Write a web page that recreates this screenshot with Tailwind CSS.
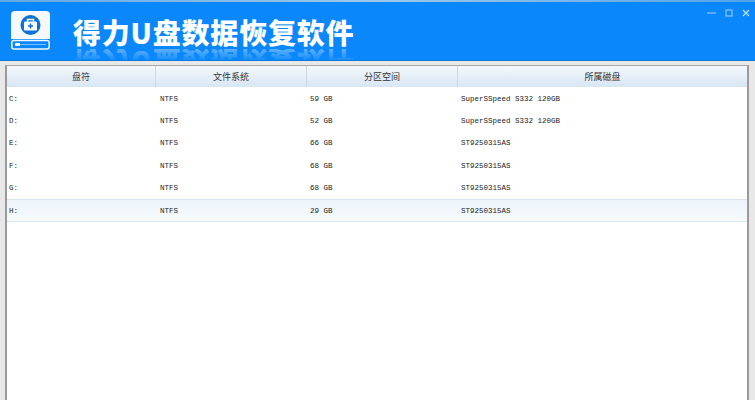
<!DOCTYPE html>
<html lang="zh">
<head>
<meta charset="utf-8">
<script src="https://cdn.jsdelivr.net/npm/@tailwindcss/browser@4"></script>
</head>
<body class="w-[755px] h-[400px] overflow-hidden bg-[#e8e8e8] font-['Liberation_Mono','Noto_Sans_CJK_SC',monospace]">
<div class="flex flex-col h-[400px]">
  <div class="h-[2px] bg-gradient-to-r from-[#5fa8e6] via-[#9cc8ec] to-[#4fa3ea] shrink-0"></div>
  <header class="relative h-[59px] shrink-0 bg-[#0a88fb] border-b border-b-[#0a78dc] flex items-start pl-[11px] pt-[9px] gap-[23px] overflow-hidden">
    <svg class="w-[39px] h-[39px] shrink-0" viewBox="0 0 39 39" aria-hidden="true">
      <path d="M4 0H35A4 4 0 0 1 39 4V28H0V4A4 4 0 0 1 4 0Z" fill="#f6f9fc"/>
      <circle cx="19.5" cy="14" r="10" fill="#0a72d6"/>
      <path d="M16.5 10.5V8.5H22.5V10.5" fill="none" stroke="#fff" stroke-width="1.4"/>
      <rect x="13" y="10.5" width="13" height="9" rx="1.2" fill="#fff"/>
      <path d="M19.5 12.5V17.5M17 15H22" stroke="#0a72d6" stroke-width="1.5"/>
      <rect x="0.8" y="29.5" width="37.4" height="8.5" rx="2.2" fill="#0a88fb" stroke="#f0f7fd" stroke-width="1.5"/>
      <rect x="4" y="32" width="5" height="3" fill="#f0f7fd"/>
      <rect x="9" y="33" width="26" height="1" fill="#7cc0f8"/>
    </svg>
    <div class="relative mt-[1px] h-[49px] w-[290px]">
      <h1 class="font-['Noto_Sans_CJK_SC',sans-serif] font-black text-[28px] leading-[40px] tracking-[0.8px] text-white whitespace-nowrap">得力U盘数据恢复软件</h1>
      <div aria-hidden="true" class="absolute left-0 top-[37px] h-[13px] w-[290px] overflow-hidden">
        <div class="-scale-y-100 font-['Noto_Sans_CJK_SC',sans-serif] font-black text-[28px] leading-[28px] tracking-[0.8px] text-white/35 whitespace-nowrap">得力U盘数据恢复软件</div>
        <div class="absolute inset-0 bg-gradient-to-b from-[#0a88fb]/0 to-[#0a88fb]"></div>
      </div>
    </div>
    <div class="absolute right-[5px] top-[7px] flex items-center gap-[9px]">
      <svg class="w-[9px] h-[8px]" viewBox="0 0 9 8" aria-hidden="true"><path d="M0 4H9" stroke="#8cc6fa" stroke-width="1.2"/></svg>
      <svg class="w-[8px] h-[8px]" viewBox="0 0 8 8" aria-hidden="true"><rect x="1" y="1" width="6" height="6" fill="none" stroke="#8cc6fa" stroke-width="1.2"/></svg>
      <svg class="w-[8px] h-[8px]" viewBox="0 0 8 8" aria-hidden="true"><path d="M1 1L7 7M7 1L1 7" stroke="#c4e0fb" stroke-width="1.2"/></svg>
    </div>
  </header>
  <main class="flex-1 ml-[5px] mr-[6px] mt-[4px] border-x-2 border-t border-x-[#9a9a9a] border-t-[#a8a8a8] bg-white text-[7.5px] text-[#222] overflow-hidden">
    <div class="grid grid-cols-[149px_151px_151px_1fr] h-[21px] bg-gradient-to-b from-[#f4f8fc] to-[#d8e6f4] text-[9px] text-[#333] font-['Noto_Sans_CJK_SC',sans-serif]">
      <div class="flex items-center justify-center border-r border-r-[#cbd8e4]">盘符</div>
      <div class="flex items-center justify-center border-r border-r-[#cbd8e4]">文件系统</div>
      <div class="flex items-center justify-center border-r border-r-[#cbd8e4]">分区空间</div>
      <div class="flex items-center justify-center">所属磁盘</div>
    </div>
    <div class="grid grid-cols-[149px_151px_151px_1fr] h-[22.4px] items-center pl-[2px] pt-[2px]"><div>C:</div><div class="pl-[2px]">NTFS</div><div class="pl-[1px]">59 GB</div><div class="pl-[1px]">SuperSSpeed S332 120GB</div></div>
    <div class="grid grid-cols-[149px_151px_151px_1fr] h-[22.4px] items-center pl-[2px] pt-[2px]"><div>D:</div><div class="pl-[2px]">NTFS</div><div class="pl-[1px]">52 GB</div><div class="pl-[1px]">SuperSSpeed S332 120GB</div></div>
    <div class="grid grid-cols-[149px_151px_151px_1fr] h-[22.4px] items-center pl-[2px] pt-[2px]"><div>E:</div><div class="pl-[2px]">NTFS</div><div class="pl-[1px]">66 GB</div><div class="pl-[1px]">ST9250315AS</div></div>
    <div class="grid grid-cols-[149px_151px_151px_1fr] h-[22.4px] items-center pl-[2px] pt-[2px]"><div>F:</div><div class="pl-[2px]">NTFS</div><div class="pl-[1px]">68 GB</div><div class="pl-[1px]">ST9250315AS</div></div>
    <div class="grid grid-cols-[149px_151px_151px_1fr] h-[22.4px] items-center pl-[2px] pt-[2px]"><div>G:</div><div class="pl-[2px]">NTFS</div><div class="pl-[1px]">68 GB</div><div class="pl-[1px]">ST9250315AS</div></div>
    <div class="grid grid-cols-[149px_151px_151px_1fr] h-[23px] items-center pl-[2px] pt-[2px] bg-gradient-to-b from-[#eef5fb] to-[#f6fafd] border-y border-y-[#d8e6f2]"><div>H:</div><div class="pl-[2px]">NTFS</div><div class="pl-[1px]">29 GB</div><div class="pl-[1px]">ST9250315AS</div></div>
  </main>
</div>
</body>
</html>
